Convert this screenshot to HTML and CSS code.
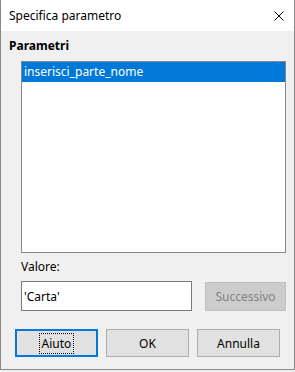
FILE: index.html
```html
<!DOCTYPE html>
<html lang="it">
<head>
    <meta charset="UTF-8">
    <title>Specifica parametro</title>
    <link rel="stylesheet" href="styles.css">
</head>
<body>
    <div class="dialog">
        <div class="titlebar">
            <span class="title">Specifica parametro</span>
            <svg class="close" width="10" height="10" viewBox="0 0 10 10">
                <path d="M0.5 0.5 L9.5 9.5 M9.5 0.5 L0.5 9.5" stroke="#000" stroke-width="1"/>
            </svg>
        </div>
        <div class="content">
            <div class="group-label">Parametri</div>
            <ul class="listbox">
                <li class="selected">inserisci_parte_nome</li>
            </ul>
            <label class="field-label" for="valore">Valore:</label>
            <div class="value-row">
                <input type="text" id="valore" class="text-input" value="'Carta'">
                <button class="btn btn-disabled" disabled>Successivo</button>
            </div>
            <div class="button-row">
                <button class="btn btn-default"><span class="focus">Aiuto</span></button>
                <button class="btn">OK</button>
                <button class="btn">Annulla</button>
            </div>
        </div>
    </div>
</body>
</html>
```

FILE: styles.css
```css
* {
    margin: 0;
    padding: 0;
    box-sizing: border-box;
}

body {
    font-family: 'Noto Sans', 'Liberation Sans', sans-serif;
    font-size: 12px;
    color: #000;
    background: #f0f0f0;
}

.dialog {
    width: 295px;
    height: 370px;
    border: 1px solid #8a8a8a;
    border-top: none;
    background: #f0f0f0;
    display: flex;
    flex-direction: column;
}

.titlebar {
    height: 31px;
    background: #fff;
    display: flex;
    align-items: center;
    justify-content: space-between;
    padding: 0 10px 0 8px;
}

.title {
    font-size: 12px;
    line-height: 16px;
}

.close {
    display: block;
}

.content {
    display: flex;
    flex-direction: column;
    padding-top: 7px;
}

.group-label {
    font-weight: bold;
    line-height: 16px;
    padding-left: 8px;
}

.listbox {
    list-style: none;
    margin: 7px 0 0 20px;
    width: 265px;
    height: 192px;
    background: #fff;
    border: 1px solid #828790;
}

.listbox li {
    height: 20px;
    line-height: 19px;
    padding-left: 2px;
}

.listbox .selected {
    background: #0078d7;
    color: #fff;
}

.field-label {
    line-height: 16px;
    margin: 6px 0 0 20px;
}

.value-row {
    display: flex;
    align-items: center;
    gap: 13px;
    margin: 6px 0 0 20px;
}

.text-input {
    width: 171px;
    height: 30px;
    border: 1px solid #7a7a7a;
    background: #fff;
    font-family: inherit;
    font-size: 12px;
    padding: 0 2px;
    outline: none;
}

.btn {
    width: 83px;
    height: 28px;
    background: #e1e1e1;
    border: 1px solid #adadad;
    font-family: inherit;
    font-size: 12px;
    color: #000;
}

.btn-disabled {
    width: 81px;
    height: 29px;
    background: #cccccc;
    border-color: #bfbfbf;
    color: #838383;
}

.button-row {
    display: flex;
    gap: 8px;
    margin: 18px 0 0 14px;
}

.btn-default {
    border: 2px solid #0078d7;
}

.focus {
    outline: 1px dotted #000;
    padding: 1px 2px;
}
```
